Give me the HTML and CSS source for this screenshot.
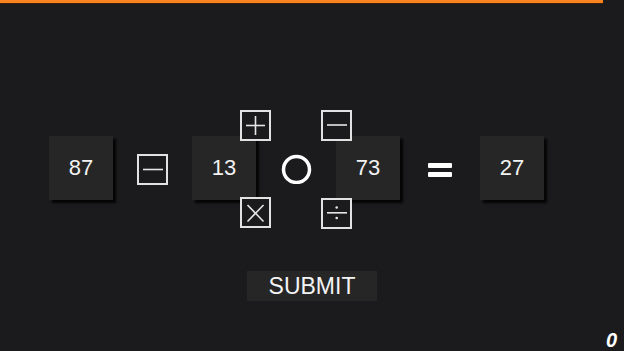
FILE: index.html
```html
<!DOCTYPE html>
<html>
<head>
<meta charset="utf-8">
<link rel="stylesheet" href="styles.css">
</head>
<body>
<div class="topbar"></div>
<main class="game">
  <div class="equation">
    <div class="num">87</div>
    <div class="op"><svg viewBox="0 0 27 27"><line x1="4" y1="13.5" x2="24" y2="13.5"/></svg></div>
    <div class="num">13</div>
    <div class="slot">
      <svg class="ring" viewBox="0 0 32 32"><circle cx="16.5" cy="17.5" r="13"/></svg>
      <div class="op opt opt-plus"><svg viewBox="0 0 27 27"><line x1="4" y1="13.5" x2="23" y2="13.5"/><line x1="13.5" y1="4" x2="13.5" y2="23"/></svg></div>
      <div class="op opt opt-minus"><svg viewBox="0 0 27 27"><line x1="4" y1="13" x2="24" y2="13"/></svg></div>
      <div class="op opt opt-times"><svg viewBox="0 0 27 27"><line x1="5.5" y1="6" x2="21.5" y2="22.5"/><line x1="21.5" y1="6" x2="5.5" y2="22.5"/></svg></div>
      <div class="op opt opt-div"><svg viewBox="0 0 27 27"><line x1="4" y1="12.8" x2="24" y2="12.8"/><circle class="dot" cx="13.7" cy="7.5" r="1.3"/><circle class="dot" cx="13.7" cy="18" r="1.3"/></svg></div>
    </div>
    <div class="num">73</div>
    <div class="equals"><span></span><span></span></div>
    <div class="num">27</div>
  </div>
  <button class="submit">SUBMIT</button>
</main>
<div class="score">0</div>
</body>
</html>
```
FILE: styles.css
```css
html, body {
  margin: 0;
  padding: 0;
}
body {
  width: 624px;
  height: 351px;
  overflow: hidden;
  background: #1b1b1d;
  font-family: "Liberation Sans", Arial, sans-serif;
  color: #f0f0f0;
  position: relative;
}
.topbar {
  width: 603px;
  height: 3px;
  background: #f7841f;
  box-shadow: 0 1px 0 #3a1f08;
}
.game {
  display: flex;
  flex-direction: column;
  align-items: flex-start;
}
.equation {
  margin-top: 133px;
  padding-left: 49px;
  display: flex;
  align-items: center;
  gap: 24px;
  height: 64px;
}
.num {
  width: 64px;
  height: 64px;
  background: #262626;
  box-shadow: 3px 3px 2px #050505;
  display: flex;
  align-items: center;
  justify-content: center;
  font-size: 22px;
  color: #f2f2f2;
}
.op {
  width: 31px;
  height: 31px;
  box-sizing: border-box;
  border: 2px solid #e2e2e2;
  background: #1b1b1d;
  margin-top: 3px;
}
.op svg {
  display: block;
  width: 27px;
  height: 27px;
}
.op line {
  stroke: #e6e6e6;
  stroke-width: 1.6;
}
.op .dot {
  fill: #e6e6e6;
}
.slot {
  width: 32px;
  height: 32px;
  position: relative;
}
.ring {
  display: block;
  width: 32px;
  height: 32px;
}
.ring circle {
  fill: none;
  stroke: #ffffff;
  stroke-width: 3.5;
}
.opt {
  position: absolute;
  margin: 0;
  z-index: 2;
}
.opt-plus { left: -40px; top: -42px; }
.opt-minus { left: 41px; top: -42px; }
.opt-times { left: -40px; top: 45px; }
.opt-div { left: 41px; top: 46px; }
.equals {
  width: 32px;
  display: flex;
  flex-direction: column;
  align-items: center;
  gap: 4px;
  margin-top: 3px;
}
.equals span {
  display: block;
  width: 24px;
  height: 5px;
  background: #ffffff;
  border-radius: 1px;
}
.submit {
  margin: 71px auto 0;
  width: 130px;
  height: 30px;
  border: none;
  background: #262626;
  color: #f4f4f4;
  font-family: "Liberation Sans", Arial, sans-serif;
  font-size: 23px;
  padding: 0;
  line-height: 30px;
}
.score {
  position: absolute;
  right: 7px;
  bottom: -1px;
  font-size: 20px;
  font-weight: bold;
  font-style: italic;
  color: #ffffff;
}
```
